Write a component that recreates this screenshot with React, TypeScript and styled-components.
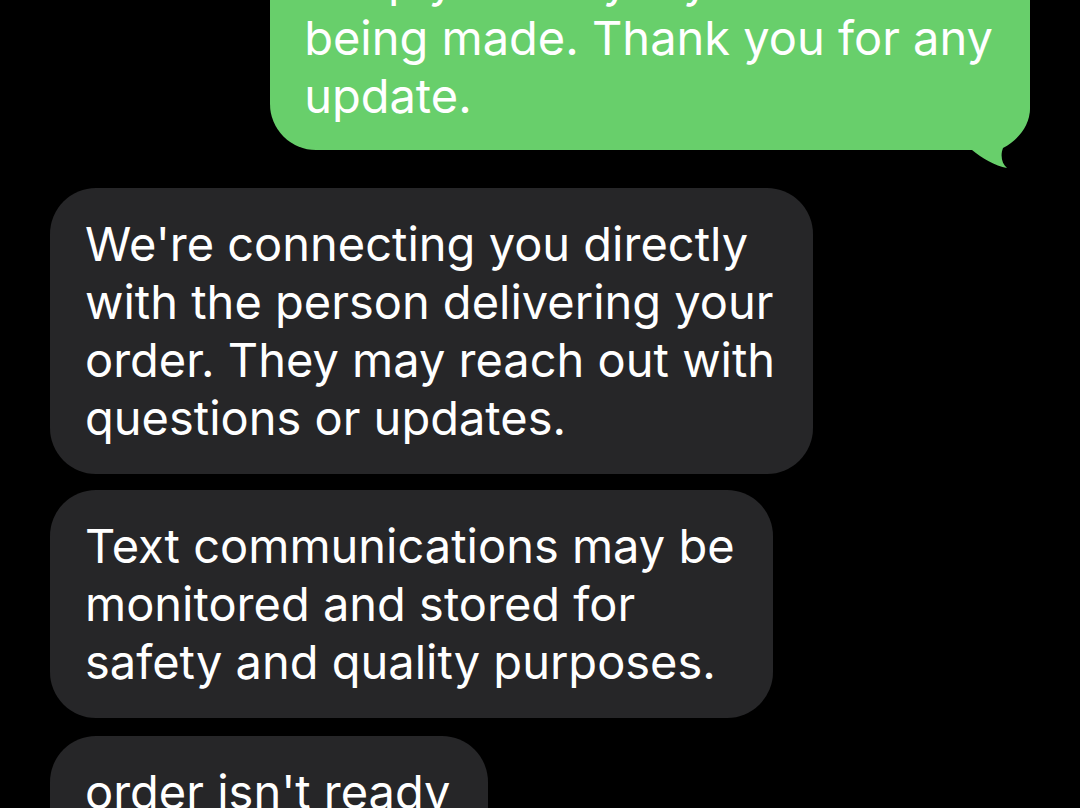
import styled, { createGlobalStyle } from 'styled-components';

const GlobalStyle = createGlobalStyle`
  html, body {
    margin: 0;
    padding: 0;
    background: #000;
    overflow: hidden;
  }
`;

const Screen = styled.div`
  width: 1080px;
  height: 808px;
  overflow: hidden;
  background: #000;
  font-family: Inter, 'Noto Sans', sans-serif;
`;

const Thread = styled.div`
  display: flex;
  flex-direction: column;
  padding: 0 50px;
  margin-top: -76px;
`;

const Row = styled.div<{ $out?: boolean; $gap: number }>`
  display: flex;
  justify-content: ${(p) => (p.$out ? 'flex-end' : 'flex-start')};
  margin-bottom: ${(p) => p.$gap}px;
`;

const Bubble = styled.div<{ $out?: boolean }>`
  position: relative;
  padding: ${(p) => (p.$out ? '27px 37px 25px 34px' : '27px 38px 27px 35px')};
  border-radius: 46px;
  background: ${(p) => (p.$out ? '#68cf6b' : '#262628')};
  color: #fff;
  font-size: 47px;
  line-height: 58px;
  white-space: nowrap;
`;

const Tail = styled.svg`
  position: absolute;
  right: 0;
  bottom: -18px;
  width: 70px;
  height: 80px;
`;

const lines = (arr: string[]) =>
  arr.map((l, i) => (
    <span key={i}>
      {l}
      {i < arr.length - 1 && <br />}
    </span>
  ));

export default function App() {
  return (
    <Screen>
      <GlobalStyle />
      <Thread>
        <Row $out $gap={38}>
          <Bubble $out>
            {lines(['a reply on why my order is', 'being made. Thank you for any', 'update.'])}
            <Tail viewBox="0 0 70 80">
              <path
                d="M70 0 L70 20 C70 38 58 52 43 60 C40 68 42 76 47 80 C35 78 22 70 12 62 L0 62 L0 0 Z"
                fill="#68cf6b"
              />
            </Tail>
          </Bubble>
        </Row>
        <Row $gap={16}>
          <Bubble>
            {lines([
              "We're connecting you directly",
              'with the person delivering your',
              'order. They may reach out with',
              'questions or updates.',
            ])}
          </Bubble>
        </Row>
        <Row $gap={18}>
          <Bubble>
            {lines(['Text communications may be', 'monitored and stored for', 'safety and quality purposes.'])}
          </Bubble>
        </Row>
        <Row $gap={18}>
          <Bubble>{lines(["order isn't ready", 'yet'])}</Bubble>
        </Row>
      </Thread>
    </Screen>
  );
}
